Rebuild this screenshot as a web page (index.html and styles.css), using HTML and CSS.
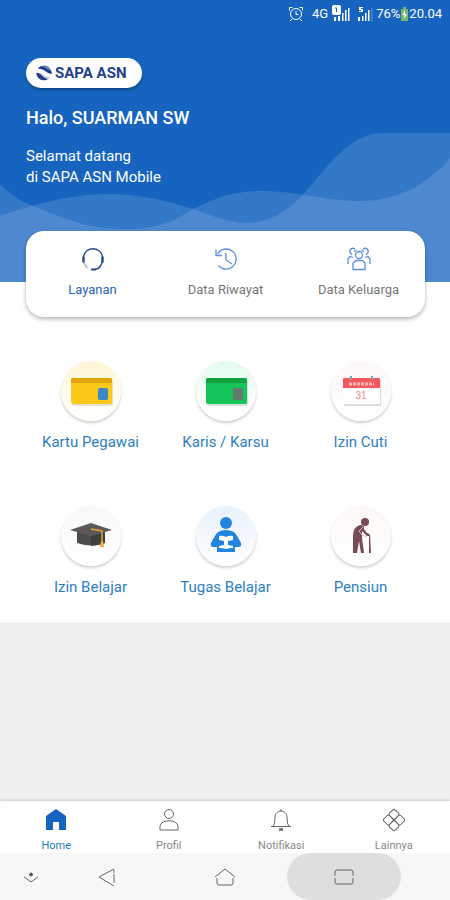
FILE: index.html
```html
<!DOCTYPE html>
<html lang="id">
<head>
<meta charset="utf-8">
<meta name="viewport" content="width=device-width, initial-scale=1">
<title>SAPA ASN</title>
<link rel="stylesheet" href="styles.css">
</head>
<body>
<header class="hero">
  <svg class="waves" viewBox="0 0 450 150" preserveAspectRatio="none" aria-hidden="true">
    <path d="M0 52C14 66 24 71 38 76C75 91 95 98 133 97C160 96 176 88 193 77C215 66 235 59 260 59C300 59 325 69 360 69C400 69 430 50 450 26V150H0Z"/>
    <path d="M0 84C40 70 75 62 110 62C140 62 168 69 193 77C212 84 230 91 247 91C275 90 292 75 307 58C328 34 350 1 383 1H450V150H0Z"/>
  </svg>
  <div class="status">
    <svg width="16" height="16" viewBox="0 0 16 16" fill="none" stroke="currentColor"><circle cx="8" cy="8" r="5.500"/><path d="M8 5v3.500h2.500M1.500 4.500v-3h3M14.500 4.500v-3h-3M4 13l-2 2M12 13l2 2"/></svg>
    <span class="net">4G</span>
    <svg width="20" height="18" viewBox="0 0 20 18" fill="currentColor"><path d="M3 12h2v4H3zM7 11h2v5H7zM11 8h1.500v8H11zM14 5h1.500v11H14zM17 3h1.500v13H17z"/><rect x="1" y="0" width="9" height="10" rx="2"/><path d="M4 2.500h2V7H5V3.500H4z" fill="#1664c0"/></svg>
    <svg class="sim" width="18" height="18" viewBox="0 0 18 18" fill="currentColor"><path d="M3 2h4v1H5v1h2v3H3V6h2V5H3zM2 12h2v4H2zM6 11h1.500v5H6zM9 8h1.500v8H9zM12 5h1.500v11H12z"/><path d="M15.500 3h.8v13h-.8z" opacity=".4"/></svg>
    <span>76%</span>
    <svg width="9" height="14" viewBox="0 0 9 14"><path d="M3 0h3v2h2v12H1V2h2z" fill="#79b86a"/><path d="M5 3L2.500 8h2L4 12l3-5H5z" fill="#fff"/></svg>
    <span>20.04</span>
  </div>
  <div class="intro">
    <div class="brand">
      <svg width="16" height="16" viewBox="0 0 16 16"><circle cx="8" cy="8" r="7.500" fill="#c3cfdf"/><path d="M1.500 4.500C5-1 12-.5 14.500 4L15.800 8.500C11 7 9 3 1.500 4.500z" fill="#6486b0"/><path d="M1.500 4.500C8 2.500 9 7.500 15.500 8.500L14.500 11.500C8 13 7 7 .8 7.500z" fill="#fff"/><path d="M4 1.500C9 1 10 5 15 5.500L15.800 9C10 8.500 8.500 3.500 2.500 3.500z" fill="#17378b"/><path d="M.4 8C6 7.500 6 13 12 14C6 17.500.5 13 .4 8z" fill="#253c7e"/></svg>
      <span>SAPA ASN</span>
    </div>
    <h1>Halo, SUARMAN SW</h1>
    <p>Selamat datang<br>di SAPA ASN Mobile</p>
  </div>
</header>

<main>
  <nav class="tabs" aria-label="Data">
    <button class="tab active" type="button">
      <svg width="26" height="26" viewBox="0 0 26 26" fill="none" stroke="#264b91" stroke-width="1.300"><path d="M3.500 11C5 0 21 0 22.500 11M22.500 15c-1 5-4 8-8 8.500"/><path d="M11 23.500h5" stroke-width="2"/><path d="M3.500 10.500v6M22.500 10.500v6" stroke-width="2.500"/><path d="M4 16.500q1 4 4 5.500" opacity=".4"/></svg>
      <span>Layanan</span>
    </button>
    <button class="tab" type="button">
      <svg width="26" height="26" viewBox="0 0 26 26" fill="none" stroke="#5b8fdb" stroke-width="1.300"><path d="M4.500 8A10 10 0 1 1 5.500 19.500M3 3.500v6h6M13 7v7l6 4"/></svg>
      <span>Data Riwayat</span>
    </button>
    <button class="tab" type="button">
      <svg width="26" height="26" viewBox="0 0 26 26" fill="none" stroke="#5b8fdb" stroke-width="1.300"><circle cx="13" cy="9" r="3.500"/><path d="M7 23.500V17l3-2.500h6l3 2.500v6.500zM9 3C6 1 3 3.500 4 6.500L6 9M17 3c3-2 6 .5 5 3.500L20 9M2 18v-5l2-2.500 3 1M24 18v-5l-2-2.500-3 1M8 5.500L10.500 4M18 5.500L15.500 4"/></svg>
      <span>Data Keluarga</span>
    </button>
  </nav>

  <section class="services">
    <a class="service" href="#kartu">
      <span class="disc yellow"><svg width="50" height="40" viewBox="0 0 50 40"><rect x="6" y="9" width="41" height="26" rx="2" fill="#d9cdb0" opacity=".6"/><rect x="5" y="7" width="41" height="26" rx="2" fill="#fbc718"/><path d="M5 12V9q0-2 2-2h37q2 0 2 2v3z" fill="#e0a60c"/><rect x="32" y="17" width="10" height="12" rx="2" fill="#3c86c8"/></svg></span>
      <span>Kartu Pegawai</span>
    </a>
    <a class="service" href="#karis">
      <span class="disc green"><svg width="50" height="40" viewBox="0 0 50 40"><rect x="6" y="9" width="41" height="26" rx="2" fill="#b5d0bf" opacity=".6"/><rect x="5" y="7" width="41" height="26" rx="2" fill="#15c55c"/><path d="M5 12V9q0-2 2-2h37q2 0 2 2v3z" fill="#0da43f"/><rect x="32" y="17" width="10" height="12" rx="2" fill="#66796f"/></svg></span>
      <span>Karis / Karsu</span>
    </a>
    <a class="service" href="#cuti">
      <span class="disc rose"><svg width="50" height="40" viewBox="0 0 50 40"><rect x="8" y="9" width="37" height="26" rx="1" fill="#ddd"/><rect x="7" y="8" width="37" height="25" rx="1" fill="#fff"/><path d="M7 17V8q0-1 1-1h35q1 0 1 1v9z" fill="#f5585f"/><path d="M13 13h25" stroke="#ffb4b4" stroke-width="3" stroke-dasharray="3 1"/><path d="M15 5v4M36 5v4" stroke="#83a3ae" stroke-width="2"/><text x="25" y="28" class="date">31</text></svg></span>
      <span>Izin Cuti</span>
    </a>
    <a class="service" href="#izin-belajar">
      <span class="disc grey"><svg width="50" height="40" viewBox="0 0 50 40"><path d="M11 15l14-4 14 4v12q-12 5-28 0z" fill="#4b4b4b"/><path d="M25 11v19q8-1 14-3V15z" fill="#3f3f3f"/><path d="M4 14l21-7 21 7-21 6z" fill="#5b5a59"/><path d="M25 13l11 2v14" fill="none" stroke="#e3a338" stroke-width="1.500"/><path d="M35 25h2l1 6h-4z" fill="#f0ab30"/></svg></span>
      <span>Izin Belajar</span>
    </a>
    <a class="service" href="#tugas-belajar">
      <span class="disc blue"><svg width="50" height="40" viewBox="0 0 50 40"><circle cx="25" cy="7" r="6" fill="#2384df"/><path d="M17 16q8-4 16 0 3 3 7 11 1 3-2 4h-4v5H16v-5h-4q-3-1-2-4 4-8 7-11z" fill="#2384df"/><path d="M18 20q4-1 7 1 3-2 7-1v4l-5 1v4l5 1v2q-4 0-7 1-3-1-7-1v-2l5-1v-4l-5-1z" fill="#fff"/></svg></span>
      <span>Tugas Belajar</span>
    </a>
    <a class="service" href="#pensiun">
      <span class="disc rose"><svg width="50" height="40" viewBox="0 0 50 40"><circle cx="29" cy="6" r="4" fill="#784c55"/><path d="M24 9q-7 2-7 11v17h4l2-12 2 12h3L26 22V15l5 5 2 0 0 17h2L34 19q-1-2-3-2l-3-4q1-4-4-4z" fill="#784c55"/><path d="M27 11l-4 4 3 4 5 2" fill="none" stroke="#d5bcc0"/></svg></span>
      <span>Pensiun</span>
    </a>
  </section>
</main>

<nav class="bottom" aria-label="Menu utama">
  <a class="item active" href="#home"><svg width="24" height="24" viewBox="0 0 24 24"><path d="M12 1L2 8v14h7v-8h6v8h7V8z"/></svg><span>Home</span></a>
  <a class="item" href="#profil"><svg width="24" height="24" viewBox="0 0 24 24"><circle cx="12" cy="6" r="4.500"/><path d="M3 22v-4c1-7 17-7 18 0v4z"/></svg><span>Profil</span></a>
  <a class="item" href="#notifikasi"><svg width="24" height="24" viewBox="0 0 24 24"><path d="M2 18.500h20M4 18.500q2-2 2-9C6 1 18 1 18 9.500q0 7 2 9M12 1v2"/><path d="M10 21.500h4" stroke-width="2.500"/></svg><span>Notifikasi</span></a>
  <a class="item" href="#lainnya"><svg width="24" height="24" viewBox="0 0 24 24"><g transform="rotate(45 12 12)"><rect x="4" y="4" width="8" height="8" rx="2"/><rect x="12" y="4" width="8" height="8" rx="2"/><rect x="4" y="12" width="8" height="8" rx="2"/><rect x="12" y="12" width="8" height="8" rx="2"/></g></svg><span>Lainnya</span></a>
</nav>

<footer class="system">
  <button type="button" aria-label="Sembunyikan"><svg width="24" height="24" viewBox="0 0 24 24"><path d="M5 12l7 5 7-5"/><circle cx="12" cy="9.500" r="1.500" fill="#444"/></svg></button>
  <button type="button" aria-label="Kembali"><svg width="24" height="24" viewBox="0 0 24 24"><path d="M19 4L4 12l15 9M19 5v3M19 9v9"/></svg></button>
  <button type="button" aria-label="Beranda"><svg width="24" height="24" viewBox="0 0 24 24"><path d="M2 12l10-8 10 8M4 13v5q0 2 2 2h12q2 0 2-2v-5"/></svg></button>
  <button class="pressed" type="button" aria-label="Terbaru"><svg width="24" height="24" viewBox="0 0 24 24"><path d="M3 11V7q0-2 2-2h14q2 0 2 2v4M3 13v4q0 2 2 2h14q2 0 2-2v-4"/></svg></button>
</footer>
</body>
</html>
```
FILE: styles.css
```css
* {
  box-sizing: border-box;
}

body {
  margin: 0;
  min-height: 100vh;
  display: flex;
  flex-direction: column;
  background: #f0f0f0;
  font-family: Roboto, sans-serif;
}

svg {
  display: block;
  flex-shrink: 0;
}

button {
  border: 0;
  padding: 0;
  background: none;
  font: inherit;
  color: inherit;
}

a {
  color: inherit;
  text-decoration: none;
}

.hero {
  position: relative;
  background: #1664c0;
  color: #fff;
  padding-bottom: 94px;
}

.waves {
  position: absolute;
  left: 0;
  bottom: 0;
  width: 100%;
  height: 150px;
  fill: #fff;
  fill-opacity: 0.13;
}

.status {
  position: relative;
  display: flex;
  justify-content: flex-end;
  align-items: center;
  height: 28px;
  padding-right: 8px;
  font-size: 13px;
  line-height: 16px;
}

.status .net {
  margin: 0 3px 0 8px;
  font-size: 13px;
}

.status .sim {
  margin-left: 5px;
  margin-right: 2px;
}

.intro {
  position: relative;
  padding: 30px 26px 0;
}

.brand {
  display: inline-flex;
  align-items: center;
  gap: 3px;
  height: 30px;
  padding: 0 16px 0 10px;
  border-radius: 15px;
  background: #fff;
  color: #23408a;
  font-size: 15px;
  font-weight: 700;
  box-shadow: 0 2px 3px rgba(0, 0, 0, 0.3);
}

h1 {
  margin: 18px 0 16px;
  font-size: 18px;
  line-height: 24px;
  font-weight: 500;
}

.intro p {
  margin: 0;
  font-size: 15px;
  line-height: 21px;
}

main {
  background: #fff;
  padding-bottom: 23px;
}

.tabs {
  position: relative;
  display: grid;
  grid-template-columns: repeat(3, 1fr);
  margin: -51px 25px 0 26px;
  padding: 15px 0 17px;
  border-radius: 18px;
  background: #fff;
  box-shadow: 0 2px 4px rgba(0, 0, 0, 0.3);
}

.tab {
  display: flex;
  flex-direction: column;
  align-items: center;
  gap: 8px;
  color: #777;
  font-size: 13px;
  line-height: 20px;
}

.tab.active {
  color: #2867b5;
}

.services {
  display: grid;
  grid-template-columns: repeat(3, 1fr);
  row-gap: 52px;
  padding: 44px 22px 0 23px;
}

.service {
  display: flex;
  flex-direction: column;
  align-items: center;
  gap: 9px;
  color: #2c80c2;
  font-size: 15px;
  line-height: 24px;
}

.disc {
  display: flex;
  align-items: center;
  justify-content: center;
  width: 60px;
  height: 60px;
  border-radius: 50%;
  box-shadow: 0 2px 3px rgba(0, 0, 0, 0.2);
}

.yellow {
  background: linear-gradient(#fff5d4, #fffefa 75%);
}

.green {
  background: linear-gradient(#e0fceb, #fff 75%);
}

.rose {
  background: linear-gradient(#fdf8f7, #fff);
}

.grey {
  background: linear-gradient(#f8f8f8, #fff);
}

.blue {
  background: linear-gradient(#e8f2fd, #fff);
}

.date {
  font-family: "Liberation Sans", sans-serif;
  font-size: 10px;
  text-anchor: middle;
  fill: #e58c8c;
}

.bottom {
  display: grid;
  grid-template-columns: repeat(4, 1fr);
  margin-top: auto;
  padding-top: 7px;
  background: #fff;
  box-shadow: 0 -1px 2px rgba(0, 0, 0, 0.15);
}

.item {
  display: flex;
  flex-direction: column;
  align-items: center;
  gap: 6px;
  color: #888;
  font-size: 11px;
  line-height: 15px;
}

.item svg {
  fill: none;
  stroke: #666;
}

.item.active {
  color: #2378b5;
}

.item.active svg {
  fill: #1664c0;
  stroke: none;
}

.system {
  display: grid;
  grid-template-columns: 40fr 112fr 124fr 114fr 49fr;
  height: 47px;
  padding-left: 11px;
  background: #f7f7f7;
}

.system button {
  display: flex;
  align-items: center;
  justify-content: center;
  border-radius: 24px;
}

.system svg {
  fill: none;
  stroke: #666;
}

.system .pressed {
  background: #dedede;
}
```
